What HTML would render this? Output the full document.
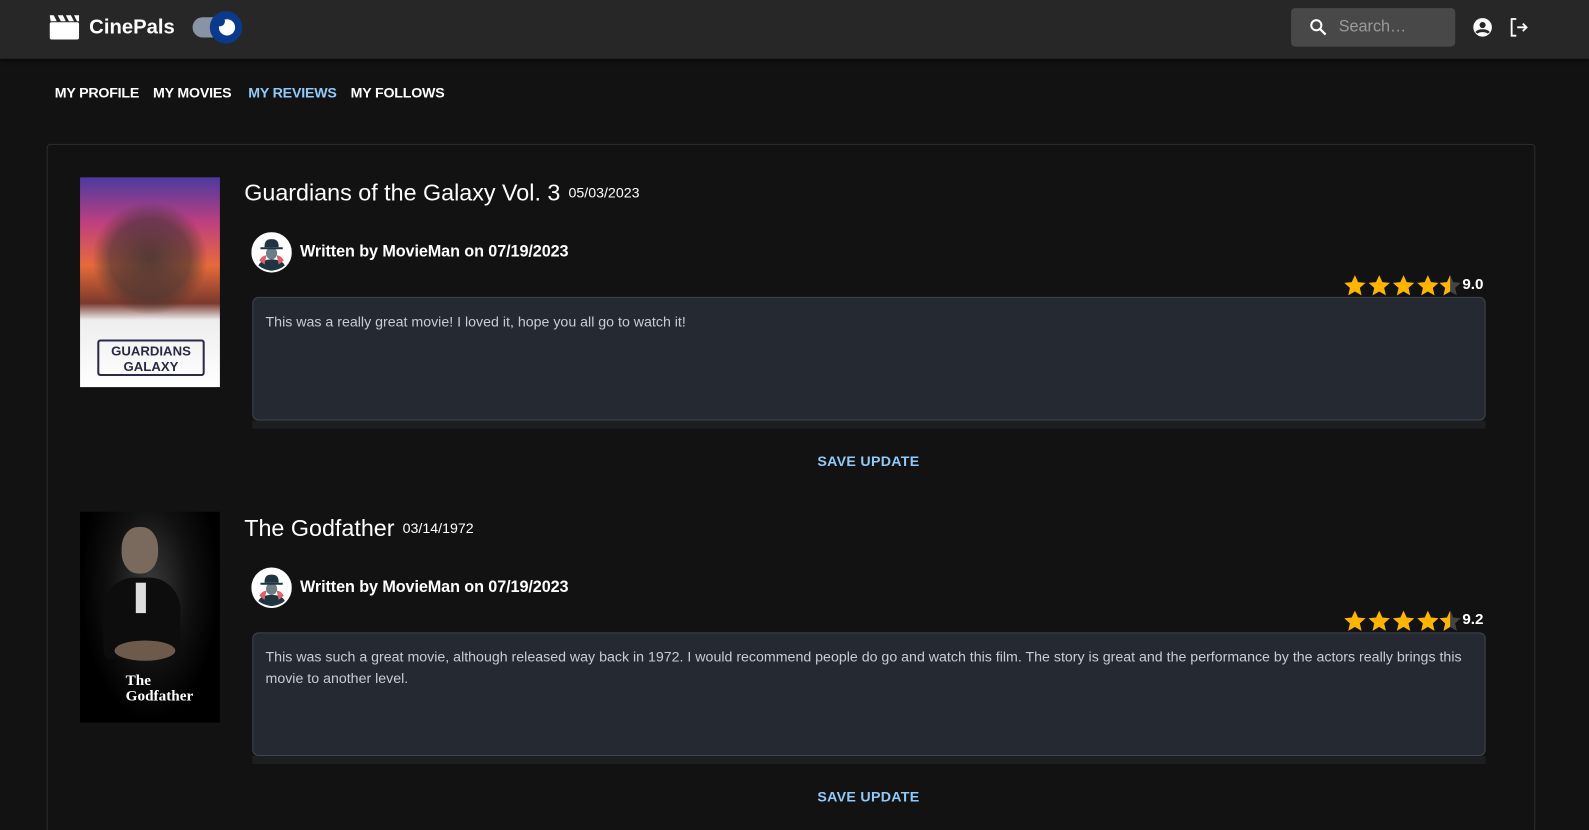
<!DOCTYPE html>
<html><head><meta charset="utf-8"><style>
*{box-sizing:border-box;margin:0;padding:0}
html,body{width:1589px;height:830px;overflow:hidden;background:#121212}
body{font-family:"Liberation Sans",sans-serif;color:#fff;position:relative}
#w{position:absolute;left:0;top:0;width:1568px;height:819px;overflow:hidden;transform:scale(1.01339);transform-origin:0 0}
.top{position:absolute;left:0;top:0;width:1568px;height:58px;background:#272727;box-shadow:0 2px 4px rgba(0,0,0,.5)}
.abs{position:absolute}
.nav{position:absolute;top:83px;font-size:14px;font-weight:bold;letter-spacing:-.2px}
.card{position:absolute;left:46px;top:142px;width:1469px;height:680px;border:1px solid #2e2e2e;border-radius:4px}
.title{position:absolute;left:241px;font-size:23px;white-space:nowrap}
.title span{font-size:14px;margin-left:8px;vertical-align:3px}
.av{position:absolute;left:248px}
.by{position:absolute;left:296px;font-size:16px;font-weight:bold;letter-spacing:-.1px}
.stars{position:absolute;left:1325px}
.rate{position:absolute;left:1443px;font-size:15px;font-weight:bold}
.ta{position:absolute;left:249px;width:1217px;height:122px;background:#252932;border:1px solid #40454f;border-radius:6px;font-size:14px;color:#c9ccd2;padding:13px 12px;line-height:21px}
.strip{position:absolute;left:249px;width:1217px;height:8px;background:#1d1e20}
.save{position:absolute;left:0;width:1714px;text-align:center;font-size:14px;font-weight:bold;color:#90caf9;letter-spacing:.3px}
</style></head><body><div id="w">
<div class="top"></div>
<svg class="abs" style="left:49px;top:14px" width="30" height="25" viewBox="0 0 30 25"><rect x="0" y="8" width="29" height="17" rx="2" fill="#fff"/><path d="M0 1h4l3 6h-6z M8 1h5l3 6h-5z M16 1h5l3 6h-5z M24 1h5v6h-2z" fill="#fff"/></svg>
<div class="abs" style="left:88px;top:16px;font-size:20px;font-weight:bold">CinePals</div>
<div class="abs" style="left:190px;top:17px;width:40px;height:20px;border-radius:10px;background:#8893a3"></div>
<div class="abs" style="left:207px;top:11px;width:32px;height:32px;border-radius:50%;background:#0a3a8c"></div>
<div class="abs" style="left:216px;top:19px;width:16px;height:16px;border-radius:50%;background:#fff"></div>
<div class="abs" style="left:212px;top:16px;width:10px;height:10px;border-radius:50%;background:#0a3a8c"></div>
<div class="abs" style="left:1274px;top:8px;width:162px;height:38px;border-radius:4px;background:#484848"></div>
<svg class="abs" style="left:1291px;top:17px" width="20" height="20" viewBox="0 0 24 24"><circle cx="9.5" cy="9.5" r="6" fill="none" stroke="#fff" stroke-width="2.4"/><path d="M14 14l6.5 6.5" stroke="#fff" stroke-width="2.6"/></svg>
<div class="abs" style="left:1321px;top:18px;font-size:16px;color:#9a9a9a">Search…</div>
<svg class="abs" style="left:1452px;top:16px" width="22" height="22" viewBox="0 0 24 24"><circle cx="12" cy="12" r="10" fill="#fff"/><circle cx="12" cy="9.5" r="3.3" fill="#272727"/><path d="M5.5 18c2-3.2 11-3.2 13 0" stroke="#272727" stroke-width="3" fill="none"/></svg>
<svg class="abs" style="left:1488px;top:16px" width="22" height="22" viewBox="0 0 24 24"><path d="M9 3H4v18h5" stroke="#fff" stroke-width="2" fill="none"/><path d="M10 12h10M16 8l4 4-4 4" stroke="#fff" stroke-width="2" fill="none"/></svg>
<div class="nav" style="left:54px">MY PROFILE</div>
<div class="nav" style="left:151px">MY MOVIES</div>
<div class="nav" style="left:245px;color:#90caf9">MY REVIEWS</div>
<div class="nav" style="left:346px">MY FOLLOWS</div>
<div class="card"></div>

<svg width="0" height="0" style="position:absolute"><defs>
<path id="st" d="M12 1.5l3.1 6.9 7.4.7-5.6 5 1.7 7.4L12 17.6l-6.6 3.9 1.7-7.4-5.6-5 7.4-.7z"/>
<clipPath id="hl"><rect x="0" y="0" width="12" height="24"/></clipPath>
<g id="av"><circle cx="20" cy="20" r="20" fill="#fff"/><path d="M7 33c3-8 23-8 26 0a20 20 0 0 1-26 0z" fill="#1f3440"/><path d="M8 28c2-4 5-5 7-5l-2 9zM32 28c-2-4-5-5-7-5l2 9z" fill="#e0606a"/><ellipse cx="20" cy="21" rx="5.5" ry="6" fill="#6b7f88"/><path d="M19 27h2l1 11h-4z" fill="#1f3440"/><path d="M9 15h22v2H9z" fill="#1f3440"/><path d="M13 15c0-6 2-8 7-8s7 2 7 8z" fill="#1f3440"/></g>
<g id="stars"><use href="#st" fill="#ffb400"/><use href="#st" x="24" fill="#ffb400"/><use href="#st" x="48" fill="#ffb400"/><use href="#st" x="72" fill="#ffb400"/><use href="#st" x="94" fill="#444"/><g transform="translate(94 0)"><use href="#st" fill="#ffb400" clip-path="url(#hl)"/></g></g>
</defs></svg>

<div class="abs" style="left:79px;top:175px;width:138px;height:207px;background:linear-gradient(180deg,#4b3aa0 0%,#c0407e 22%,#e66a3a 42%,#7a3a2c 60%,#eee 68%,#fff 100%)"></div>
<div class="abs" style="left:92px;top:200px;width:112px;height:110px;background:radial-gradient(ellipse at 50% 50%,rgba(60,50,50,.85) 0%,rgba(60,50,50,.6) 50%,rgba(0,0,0,0) 72%)"></div>
<div class="abs" style="left:96px;top:335px;width:106px;height:36px;border:2px solid #2a2a48;border-radius:3px;color:#2a2a48;font-weight:bold;font-size:13px;text-align:center;line-height:15px;padding-top:2px">GUARDIANS<br>GALAXY</div>
<div class="title" style="top:177px">Guardians of the Galaxy Vol. 3<span>05/03/2023</span></div>
<svg class="av" style="top:229px" width="40" height="40"><use href="#av"/></svg>
<div class="by" style="top:240px">Written by MovieMan on 07/19/2023</div>
<svg class="stars" style="top:270px" width="118" height="24"><use href="#stars"/></svg>
<div class="rate" style="top:272px">9.0</div>
<div class="ta" style="top:293px">This was a really great movie! I loved it, hope you all go to watch it!</div>
<div class="strip" style="top:415px"></div>
<div class="save" style="top:447px">SAVE UPDATE</div>

<div class="abs" style="left:79px;top:505px;width:138px;height:208px;background:radial-gradient(ellipse at 50% 35%,#3a3a3a 0%,#111 40%,#000 70%)"></div>
<div class="abs" style="left:120px;top:520px;width:36px;height:46px;border-radius:45%;background:#7a6a5e"></div>
<div class="abs" style="left:102px;top:570px;width:76px;height:80px;border-radius:40% 40% 10% 10%;background:#0d0d0d"></div>
<div class="abs" style="left:134px;top:575px;width:10px;height:30px;background:#ddd"></div>
<div class="abs" style="left:113px;top:632px;width:60px;height:20px;border-radius:50%;background:#6d5a4a"></div>
<div class="abs" style="left:124px;top:665px;font-size:15px;font-weight:bold;font-family:'Liberation Serif',serif;line-height:15px">The<br>Godfather</div>
<div class="title" style="top:508px">The Godfather<span>03/14/1972</span></div>
<svg class="av" style="top:560px" width="40" height="40"><use href="#av"/></svg>
<div class="by" style="top:571px">Written by MovieMan on 07/19/2023</div>
<svg class="stars" style="top:601px" width="118" height="24"><use href="#stars"/></svg>
<div class="rate" style="top:603px">9.2</div>
<div class="ta" style="top:624px">This was such a great movie, although released way back in 1972. I would recommend people do go and watch this film. The story is great and the performance by the actors really brings this movie to another level.</div>
<div class="strip" style="top:746px"></div>
<div class="save" style="top:778px">SAVE UPDATE</div>
</div></body></html>
